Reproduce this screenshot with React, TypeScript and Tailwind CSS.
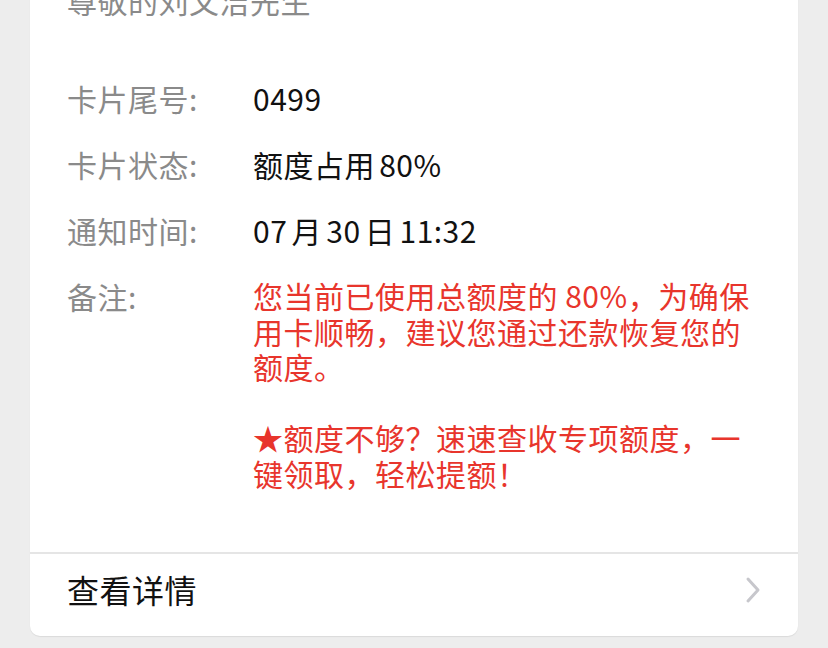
const rows = [
  { label: '卡片尾号:', value: '0499' },
  { label: '卡片状态:', value: '额度占用 80%' },
  { label: '通知时间:', value: '07 月 30 日 11:32' },
];

export default function App() {
  return (
    <div className="h-[648px] w-[828px] overflow-hidden bg-[#ededed] px-[30px] font-['Noto_Sans_CJK_SC',sans-serif]">
      <div className="-mt-[40px] rounded-[10px] bg-white shadow-[0_1px_1px_rgba(0,0,0,0.08)]">
        <div className="pl-[37px] pr-[40px] pt-[22px] pb-[61px]">
          <div className="text-[30px] leading-[36px] tracking-[0.5px] text-[#8a8a8a]">尊敬的刘文洁先生</div>
          <div className="mt-[62px] flex flex-col gap-[30px]">
            {rows.map((r) => (
              <div key={r.label} className="flex text-[30px] leading-[36px] tracking-[0.5px]">
                <div className="w-[186px] shrink-0 text-[#8a8a8a]">{r.label}</div>
                <div className="text-[#111111] [word-spacing:-3px]">{r.value}</div>
              </div>
            ))}
            <div className="flex text-[30px] leading-[36px] tracking-[0.5px]">
              <div className="w-[186px] shrink-0 text-[#8a8a8a]">备注:</div>
              <div className="w-[505px] leading-[35.5px] text-[#e8352c]">
                <p>您当前已使用总额度的 80%，为确保用卡顺畅，建议您通过还款恢复您的额度。</p>
                <p className="mt-[35.5px]">★额度不够？速速查收专项额度，一键领取，轻松提额！</p>
              </div>
            </div>
          </div>
        </div>
        <div className="flex h-[84px] items-center justify-between border-t-2 border-[#e5e5e5] pl-[37px] pr-[36px]">
          <span className="-mt-[13px] text-[32px] tracking-[0.5px] text-[#111111]">查看详情</span>
          <svg width="18" height="28" viewBox="0 0 18 28" className="-mt-[11px]">
            <polyline points="4,3 14,14 4,25" fill="none" stroke="#c7c7cc" strokeWidth="3" strokeLinecap="round" strokeLinejoin="round" />
          </svg>
        </div>
      </div>
    </div>
  );
}
